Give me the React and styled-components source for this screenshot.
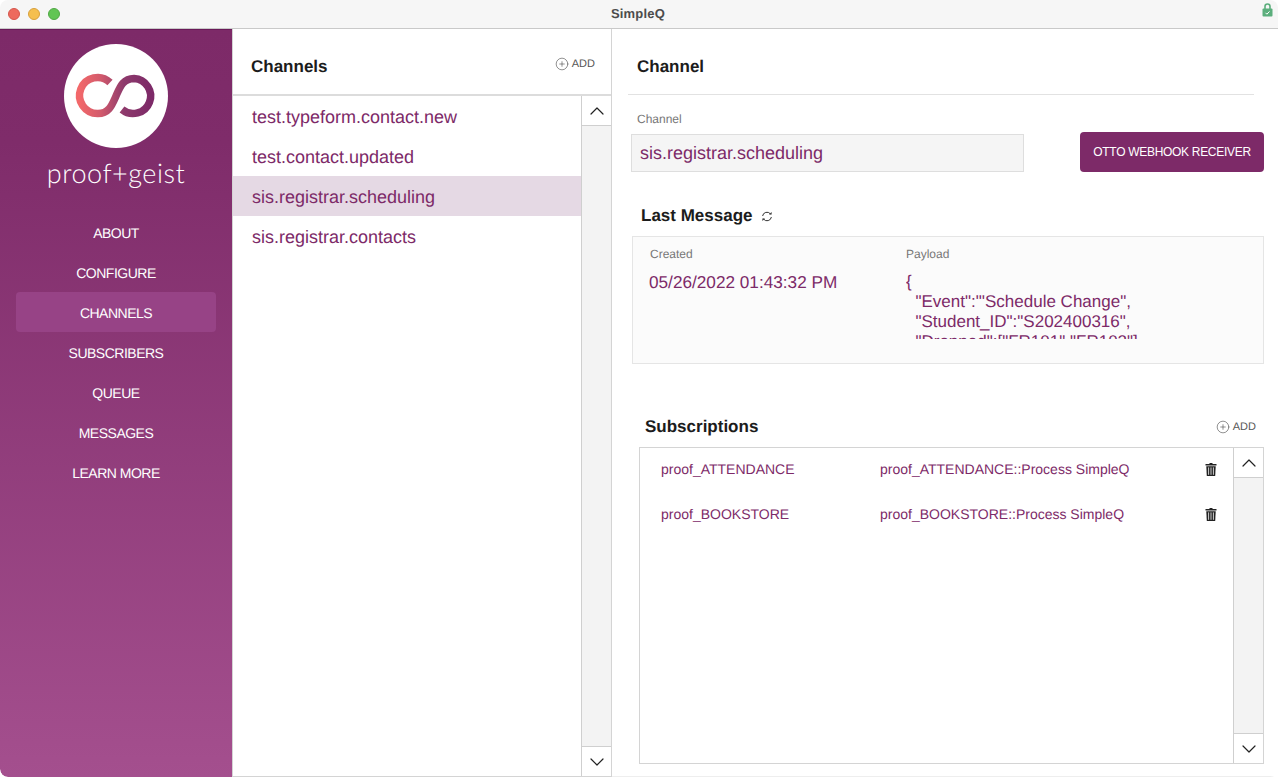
import React from "react";
import styled, { createGlobalStyle } from "styled-components";
import { ChevronUp, ChevronDown, CirclePlus } from "lucide-react";

const plum = "#7d2a68";
const navItems = ["ABOUT", "CONFIGURE", "CHANNELS", "SUBSCRIBERS", "QUEUE", "MESSAGES", "LEARN MORE"];
const channels = ["test.typeform.contact.new", "test.contact.updated", "sis.registrar.scheduling", "sis.registrar.contacts"];
const subscriptions = [
  { file: "proof_ATTENDANCE", script: "proof_ATTENDANCE::Process SimpleQ" },
  { file: "proof_BOOKSTORE", script: "proof_BOOKSTORE::Process SimpleQ" },
];
const payload = `{
  "Event":"'Schedule Change",
  "Student_ID":"S202400316",
  "Dropped":["FR101","FR102"]
}`;

function LogoMark() {
  return (
    <svg width="104" height="104" viewBox="0 0 104 104">
      <defs>
        <linearGradient id="loop" x1="0" x2="1" y1="0" y2="0">
          <stop offset="0" stopColor="#f2686a" />
          <stop offset="0.3" stopColor="#d25a6c" />
          <stop offset="0.62" stopColor="#8e3a6c" />
          <stop offset="1" stopColor="#7d2a68" />
        </linearGradient>
      </defs>
      <circle cx="52" cy="52" r="52" fill="#fff" />
      <path
        d="M46 38.5 A18 18 0 1 0 34 69.5 C45 69.5 48 61 52 52 C56 43 59 34.5 70 34.5 A17.5 17.5 0 1 1 58 65.5"
        fill="none"
        stroke="url(#loop)"
        strokeWidth="7.5"
      />
    </svg>
  );
}

function TrashIcon() {
  return (
    <svg width="12" height="13" viewBox="0 0 12 13">
      <path d="M4.2 1 L4.8 0 H7.2 L7.8 1 H11.5 V2.4 H0.5 V1 Z" fill="#222" />
      <path d="M1.3 3.2 H10.7 L10.2 13 H1.8 Z" fill="#222" />
      <path d="M3.6 4.4 V11.8 M6 4.4 V11.8 M8.4 4.4 V11.8" stroke="#fff" strokeWidth="0.8" />
    </svg>
  );
}

function RefreshIcon() {
  return (
    <svg width="12" height="11" viewBox="0 0 12 11" fill="none" stroke="#333" strokeWidth="1">
      <path d="M1.6 5 A4.4 4.4 0 0 1 9.4 2.9" />
      <path d="M10.4 6 A4.4 4.4 0 0 1 2.6 8.1" />
      <path d="M8 3.4 H10.6 V1" fill="#333" stroke="none" />
      <path d="M4 7.6 H1.4 V10" fill="#333" stroke="none" />
    </svg>
  );
}

function Scroller() {
  return (
    <ScrollTrack>
      <ScrollButton><ChevronUp size={24} strokeWidth={1.2} /></ScrollButton>
      <ScrollFill />
      <ScrollButton><ChevronDown size={24} strokeWidth={1.2} /></ScrollButton>
    </ScrollTrack>
  );
}

function AddLink({ raised }) {
  return (
    <AddButton $raised={raised}>
      <CirclePlus size={14} strokeWidth={1} />
      ADD
    </AddButton>
  );
}

export default function App() {
  return (
    <>
      <GlobalStyle />
      <Window>
        <TitleBar>
          <Lights>
            <Light $color="#ed6a5e" $edge="#d5564c" />
            <Light $color="#f5bf4f" $edge="#d8a03c" />
            <Light $color="#61c554" $edge="#50a845" />
          </Lights>
          <Title>SimpleQ</Title>
          <LockSlot>
            <svg width="11" height="14" viewBox="0 0 11 14">
              <path d="M3 6 V3.5 a2.5 2.5 0 0 1 5 0 V6" fill="none" stroke="#5bae7c" strokeWidth="1.6" />
              <rect x="0.5" y="5.5" width="10" height="8" rx="1" fill="#5bae7c" />
              <path d="M3.5 9.8 l1.4 1.4 l2.6 -2.8" fill="none" stroke="#fff" strokeWidth="1" />
            </svg>
          </LockSlot>
        </TitleBar>

        <Body>
          <Sidebar>
            <LogoBlock>
              <LogoMark />
              <Wordmark>proof+geist</Wordmark>
            </LogoBlock>
            <Nav>
              {navItems.map((item) => (
                <NavItem key={item} $active={item === "CHANNELS"}>{item}</NavItem>
              ))}
            </Nav>
          </Sidebar>

          <ListPane>
            <ListHeader>
              <PaneTitle>Channels</PaneTitle>
              <AddLink raised />
            </ListHeader>
            <ListBody>
              <ChannelList>
                {channels.map((name) => (
                  <ChannelRow key={name} $selected={name === "sis.registrar.scheduling"}>{name}</ChannelRow>
                ))}
              </ChannelList>
              <Scroller />
            </ListBody>
          </ListPane>

          <DetailPane>
            <DetailHeader>
              <PaneTitle>Channel</PaneTitle>
            </DetailHeader>

            <ChannelForm>
              <Field>
                <FieldLabel>Channel</FieldLabel>
                <ChannelInput>sis.registrar.scheduling</ChannelInput>
              </Field>
              <PrimaryButton>OTTO WEBHOOK RECEIVER</PrimaryButton>
            </ChannelForm>

            <MessageHeading>
              <PaneTitle>Last Message</PaneTitle>
              <RefreshIcon />
            </MessageHeading>

            <MessageBox>
              <CreatedColumn>
                <SmallLabel>Created</SmallLabel>
                <MessageValue>05/26/2022 01:43:32 PM</MessageValue>
              </CreatedColumn>
              <PayloadColumn>
                <SmallLabel>Payload</SmallLabel>
                <PayloadText>{payload}</PayloadText>
              </PayloadColumn>
            </MessageBox>

            <SubsHeader>
              <PaneTitle>Subscriptions</PaneTitle>
              <AddLink />
            </SubsHeader>

            <SubsTable>
              <SubsRows>
                {subscriptions.map((sub) => (
                  <SubsRow key={sub.file}>
                    <span>{sub.file}</span>
                    <span>{sub.script}</span>
                    <TrashIcon />
                  </SubsRow>
                ))}
              </SubsRows>
              <Scroller />
            </SubsTable>
          </DetailPane>
        </Body>
      </Window>
    </>
  );
}

const GlobalStyle = createGlobalStyle`
  html, body {
    margin: 0;
    height: 100%;
    background: #fff;
    overflow: hidden;
  }
  body {
    font-family: "Liberation Sans", Arial, sans-serif;
    text-rendering: geometricPrecision;
  }
`;

const Window = styled.div`
  width: 1278px;
  height: 777px;
  display: flex;
  flex-direction: column;
  overflow: hidden;
  border-radius: 8px;
  background: #fff;
`;

const TitleBar = styled.div`
  height: 28px;
  flex: none;
  display: grid;
  grid-template-columns: 1fr auto 1fr;
  align-items: center;
  background: #f6f6f6;
  border-bottom: 1px solid #c9c9c9;
`;

const Lights = styled.div`
  display: flex;
  gap: 8px;
  padding-left: 8px;
`;

const Light = styled.span`
  width: 10px;
  height: 10px;
  border-radius: 50%;
  background: ${(p) => p.$color};
  border: 1px solid ${(p) => p.$edge};
`;

const Title = styled.div`
  font-size: 13px;
  font-weight: 700;
  letter-spacing: 0.2px;
  color: #4c4c4c;
  margin: -1px 2px 0 0;
`;

const LockSlot = styled.div`
  display: flex;
  justify-content: flex-end;
  padding: 0 5px 8px 0;
`;

const Body = styled.div`
  flex: 1;
  min-height: 0;
  display: flex;
`;

const Sidebar = styled.aside`
  width: 232px;
  flex: none;
  display: flex;
  flex-direction: column;
  align-items: center;
  background: linear-gradient(180deg, #7d2a68 0%, #7f2c6a 15%, #a44f8e 100%);
  border-top: 1px solid #6a1a58;
  border-bottom-left-radius: 8px;
  box-sizing: border-box;
`;

const LogoBlock = styled.div`
  display: flex;
  flex-direction: column;
  align-items: center;
  padding-top: 14px;
`;

const Wordmark = styled.div`
  font-family: Lato, sans-serif;
  font-weight: 300;
  font-size: 27px;
  line-height: 34px;
  letter-spacing: 0.5px;
  color: #fff;
  margin-top: 8px;
`;

const Nav = styled.nav`
  width: 200px;
  display: flex;
  flex-direction: column;
  margin-top: 22px;
`;

const NavItem = styled.div`
  height: 40px;
  display: flex;
  align-items: center;
  justify-content: center;
  box-sizing: border-box;
  padding-top: 2px;
  border-radius: 4px;
  font-size: 14px;
  letter-spacing: -0.5px;
  color: #fff;
  background: ${(p) => (p.$active ? "#974386" : "transparent")};
`;

const ListPane = styled.section`
  width: 380px;
  flex: none;
  display: flex;
  flex-direction: column;
  border-left: 1px solid #d4d4d4;
  border-right: 1px solid #d4d4d4;
  border-bottom: 1px solid #d4d4d4;
  box-sizing: border-box;
`;

const ListHeader = styled.div`
  height: 67px;
  flex: none;
  display: flex;
  align-items: center;
  justify-content: space-between;
  box-sizing: border-box;
  padding: 11px 16px 0 18px;
  border-bottom: 2px solid #dcdcdc;
`;

const PaneTitle = styled.h2`
  margin: 0;
  font-size: 17px;
  font-weight: 700;
  color: #1c1c1c;
`;

const AddButton = styled.div`
  display: flex;
  align-items: center;
  gap: 3px;
  margin-top: ${(p) => (p.$raised ? "-6px" : "0")};
  font-size: 11px;
  color: #555;

  svg {
    color: #444;
  }
`;

const ListBody = styled.div`
  flex: 1;
  min-height: 0;
  display: flex;
`;

const ChannelList = styled.div`
  flex: 1;
`;

const ChannelRow = styled.div`
  height: 40px;
  display: flex;
  align-items: center;
  box-sizing: border-box;
  padding: 2px 0 0 19px;
  font-size: 18px;
  color: ${plum};
  background: ${(p) => (p.$selected ? "#e5d9e4" : "transparent")};
`;

const ScrollTrack = styled.div`
  width: 30px;
  flex: none;
  display: flex;
  flex-direction: column;
  border-left: 1px solid #cfcfcf;
  box-sizing: border-box;
`;

const ScrollButton = styled.div`
  height: 29px;
  flex: none;
  display: flex;
  align-items: center;
  justify-content: center;
  color: #222;
  background: #fff;
`;

const ScrollFill = styled.div`
  flex: 1;
  background: #f3f3f3;
  border-top: 1px solid #cfcfcf;
  border-bottom: 1px solid #cfcfcf;
`;

const DetailPane = styled.section`
  flex: 1;
  min-width: 0;
  display: flex;
  flex-direction: column;
  padding: 0 14px 12px 17px;
  border-bottom: 1px solid #eeeeee;
`;

const DetailHeader = styled.div`
  height: 66px;
  flex: none;
  display: flex;
  align-items: center;
  box-sizing: border-box;
  margin: 0 10px 0 -1px;
  padding: 11px 0 0 9px;
  border-bottom: 1px solid #e2e2e2;
`;

const ChannelForm = styled.div`
  display: flex;
  align-items: flex-end;
  justify-content: space-between;
  padding: 16px 0 0 2px;
`;

const Field = styled.div`
  display: flex;
  flex-direction: column;
`;

const FieldLabel = styled.label`
  font-size: 12px;
  color: #777;
  line-height: 16px;
  padding: 0 0 7px 6px;
`;

const ChannelInput = styled.div`
  width: 393px;
  height: 38px;
  display: flex;
  align-items: center;
  box-sizing: border-box;
  padding-left: 8px;
  font-size: 18px;
  color: ${plum};
  background: #f5f5f5;
  border: 1px solid #dedede;
`;

const PrimaryButton = styled.button`
  width: 184px;
  height: 40px;
  padding: 0;
  border: 0;
  border-radius: 4px;
  font-family: inherit;
  font-size: 12px;
  letter-spacing: -0.3px;
  color: #fff;
  background: ${plum};
`;

const MessageHeading = styled.div`
  display: flex;
  align-items: center;
  gap: 8px;
  padding: 34px 0 0 12px;
  height: 20px;
`;

const MessageBox = styled.div`
  height: 128px;
  margin: 10px 0 0 3px;
  display: flex;
  box-sizing: border-box;
  padding: 10px 0 0 17px;
  background: #fbfbfb;
  border: 1px solid #e5e5e5;
`;

const CreatedColumn = styled.div`
  width: 256px;
  flex: none;
`;

const PayloadColumn = styled.div`
  flex: 1;
  min-width: 0;
`;

const SmallLabel = styled.div`
  font-size: 12px;
  line-height: 14px;
  color: #777;
`;

const MessageValue = styled.div`
  margin-top: 11px;
  margin-left: -1px;
  font-size: 17.2px;
  line-height: 20px;
  color: ${plum};
`;

const PayloadText = styled.pre`
  margin: 11px 0 0;
  height: 67px;
  overflow: hidden;
  font-family: inherit;
  font-size: 17px;
  line-height: 20px;
  color: ${plum};
`;

const SubsHeader = styled.div`
  display: flex;
  align-items: center;
  justify-content: space-between;
  padding: 53px 8px 0 16px;
  height: 20px;
`;

const SubsTable = styled.div`
  flex: 1;
  min-height: 0;
  margin: 10px 0 0 10px;
  display: flex;
  border: 1px solid #d4d4d4;
`;

const SubsRows = styled.div`
  flex: 1;
`;

const SubsRow = styled.div`
  height: 41px;
  display: grid;
  grid-template-columns: 219px 1fr 12px;
  align-items: center;
  padding: 0 16px 4px 21px;
  font-size: 14px;
  color: ${plum};

  svg {
    margin-top: 2px;
  }
`;
